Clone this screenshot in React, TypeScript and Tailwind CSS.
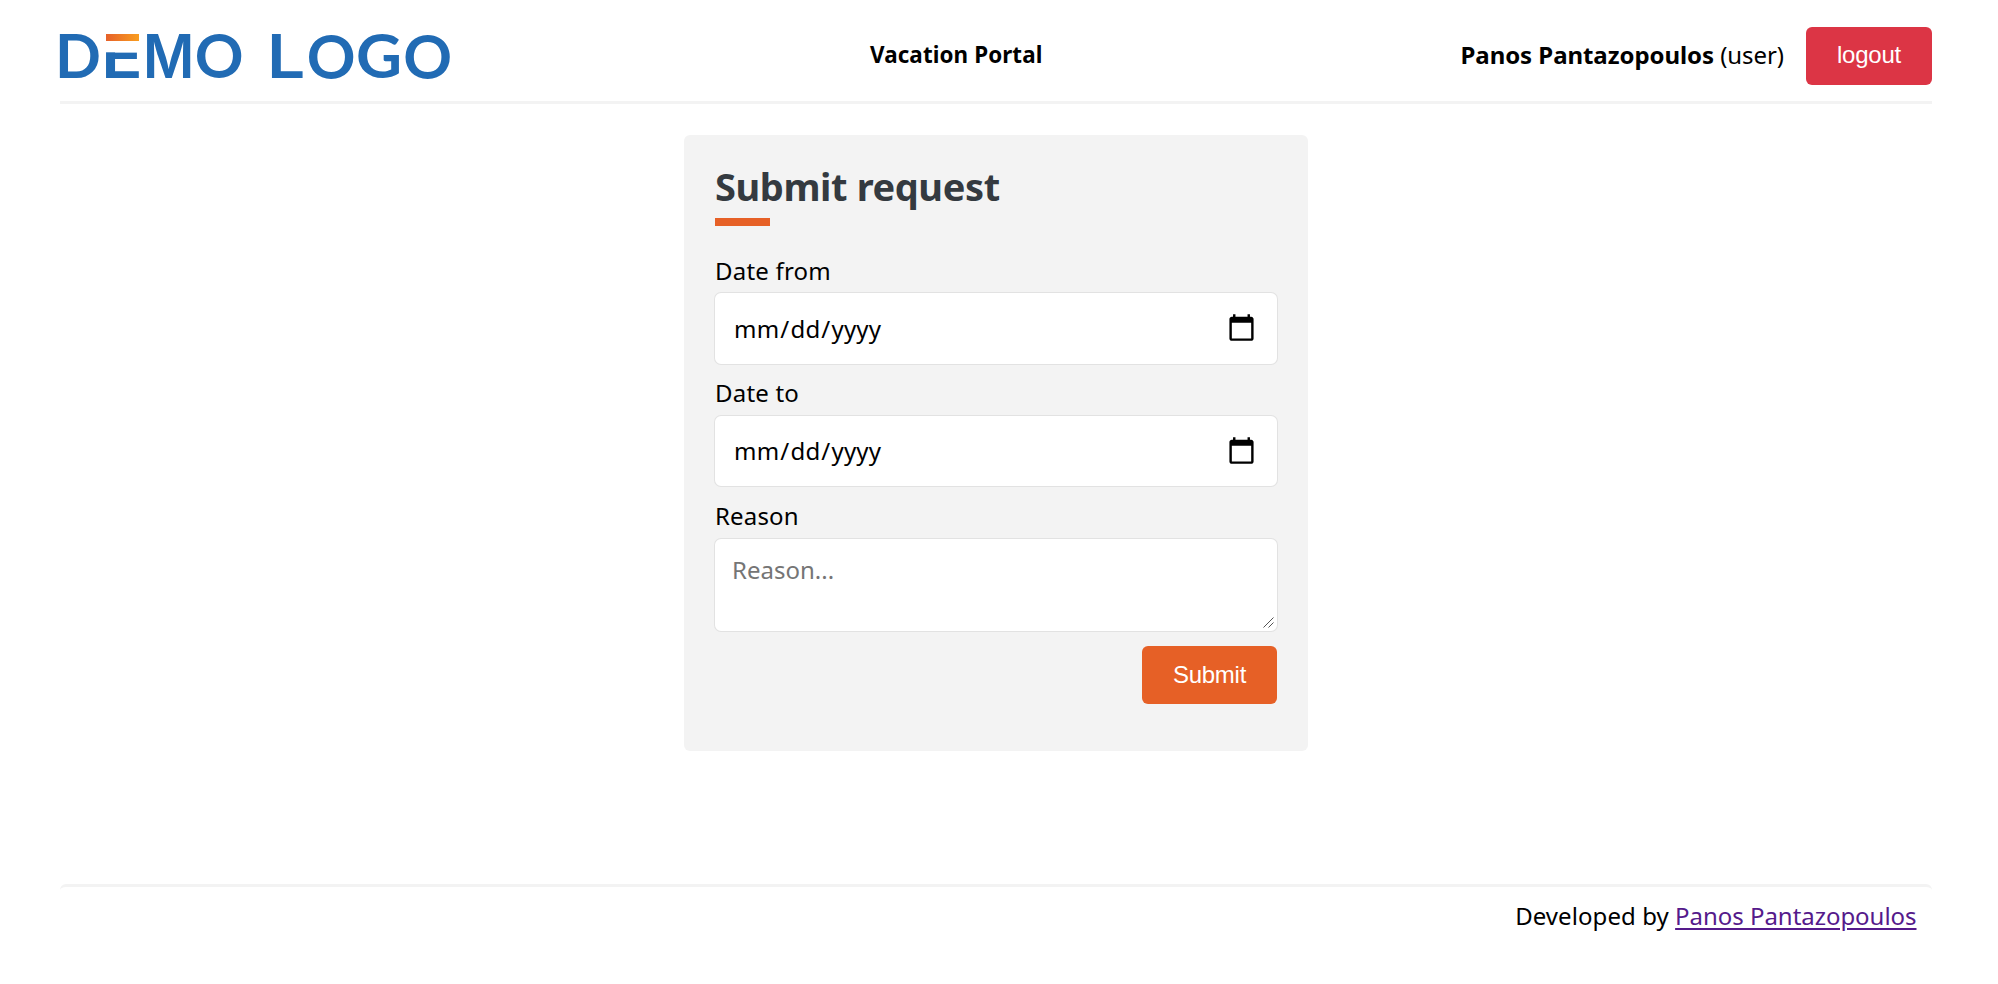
type Glyph = { ch: string; font: string; weight: number; x: number; y: number; bearing: number; sx: number; sy: number; size: number };

const glyphs: Glyph[] = [
  { ch: 'D', font: 'Lato', weight: 700, x: 0, y: 47, bearing: 8.3, sx: 0.99, sy: 1, size: 61 },
  { ch: 'E', font: 'Inter', weight: 600, x: 46, y: 47, bearing: 7.3, sx: 1.14, sy: 1, size: 60.5 },
  { ch: 'M', font: 'Inter', weight: 600, x: 87, y: 47, bearing: 7.3, sx: 0.92, sy: 1, size: 60.5 },
  { ch: 'O', font: 'Lato', weight: 700, x: 137, y: 47.4, bearing: 3.8, sx: 0.99, sy: 1.01, size: 61 },
  { ch: 'L', font: 'Inter', weight: 600, x: 212, y: 47, bearing: 7.3, sx: 1.12, sy: 1, size: 60.5 },
  { ch: 'O', font: 'Lato', weight: 700, x: 249, y: 47.6, bearing: 3.8, sx: 0.99, sy: 1.01, size: 61 },
  { ch: 'G', font: 'Lato', weight: 700, x: 298.5, y: 47.4, bearing: 3.8, sx: 1.04, sy: 1, size: 61 },
  { ch: 'O', font: 'Lato', weight: 700, x: 345.5, y: 47.6, bearing: 3.8, sx: 0.99, sy: 1.01, size: 61 },
];

function Logo() {
  return (
    <svg width="392" height="50" viewBox="0 0 392 50" className="overflow-visible" aria-label="Demo Logo">
      <defs>
        <linearGradient id="bar" x1="0" x2="1" y1="0" y2="0">
          <stop offset="0" stopColor="#e6612a" />
          <stop offset="1" stopColor="#f99d1f" />
        </linearGradient>
      </defs>
      <g fill="#216bb4">
        {glyphs.map((g, i) => (
          <text
            key={i}
            fontFamily={`${g.font}, sans-serif`}
            fontWeight={g.weight}
            fontSize={g.size}
            transform={`translate(${g.x - (g.bearing * g.size * g.sx) / 100} ${g.y}) scale(${g.sx} ${g.sy})`}
          >
            {g.ch}
          </text>
        ))}
      </g>
      <rect x="45" y="1" width="36" height="20.3" fill="#fff" />
      <rect x="46" y="3" width="33" height="7" fill="url(#bar)" />
    </svg>
  );
}

const field =
  'block w-full rounded-[6px] border-2 border-white bg-white text-[24px] text-black outline-none ring-1 ring-[#e2e2e2]';

const dateField =
  'pr-[18px] pl-[16px] tracking-[0.2px] [&::-webkit-calendar-picker-indicator]:h-[31px] [&::-webkit-calendar-picker-indicator]:w-[31px] [&::-webkit-calendar-picker-indicator]:bg-contain [&::-webkit-calendar-picker-indicator]:p-0';

export default function App() {
  return (
    <div className="flex h-[984px] flex-col bg-white pr-[66px] pl-[60px] font-['Noto_Sans',sans-serif] text-[24px] text-black">
      <header className="flex h-[104px] shrink-0 items-center justify-between border-b-[3px] border-[#f3f3f3] pt-[11px]">
        <Logo />
        <h4 className="pb-0.5 text-[22.4px] font-bold tracking-[0.1px]">Vacation Portal</h4>
        <div className="flex items-center">
          <p className="pb-0.5 tracking-[-0.06px]">
            <strong className="font-bold">Panos Pantazopoulos</strong> (user)
          </p>
          <button className="ml-[22px] h-[58px] w-[126px] rounded-[6px] bg-[#dc3545] pb-0.5 font-['Liberation_Sans',sans-serif] text-[24px] leading-7 tracking-[-0.2px] text-white">
            logout
          </button>
        </div>
      </header>

      <main className="mt-[31px] ml-[624px] h-[616px] w-[624px] shrink-0 rounded-[6px] bg-[#f3f3f3] px-[31px] pt-[27px]">
        <h1 className="text-[38px] leading-[48px] font-bold tracking-[-0.4px] text-[#343a40]">Submit request</h1>
        <div className="mt-2 h-2 w-[55px] bg-[#e66026]" />
        <form>
          <label className="mt-[29px] block leading-8 tracking-[0.2px]">Date from</label>
          <input type="date" className={`${field} ${dateField} mt-1.5 h-[71px]`} />
          <label className="mt-[13px] block leading-8 tracking-[0.2px]">Date to</label>
          <input type="date" className={`${field} ${dateField} mt-[7px] h-[70px]`} />
          <label className="mt-[14px] block leading-8 tracking-[0.15px]">Reason</label>
          <div className="relative mt-[7px]">
            <textarea
              placeholder="Reason..."
              className={`${field} h-[92px] resize-none px-[15px] py-[13px] leading-8 placeholder:text-[#757575]`}
            />
            <svg className="absolute right-[3px] bottom-[3px]" width="11" height="11" viewBox="0 0 11 11" stroke="#555" strokeWidth="1">
              <path d="M0.5 10.5 10.5 0.5M5.5 10.5 10.5 5.5" />
            </svg>
          </div>
          <div className="mt-[15px] flex justify-end">
            <button
              type="button"
              className="h-[58px] w-[135px] rounded-[6px] bg-[#e66026] font-['Liberation_Sans',sans-serif] text-[24px] leading-7 tracking-[-0.25px] text-white"
            >
              Submit
            </button>
          </div>
        </form>
      </main>

      <footer className="mt-[133px] rounded-[6px] border-t-[3px] border-[#f3f3f3] pt-[13px] pr-[15.5px] text-right leading-8">
        <span className="tracking-[0.07px]">Developed by </span>
        <a href="#" className="text-[#551a8b] underline decoration-2 underline-offset-[3px] tracking-[-0.04px]">
          Panos Pantazopoulos
        </a>
      </footer>
    </div>
  );
}
